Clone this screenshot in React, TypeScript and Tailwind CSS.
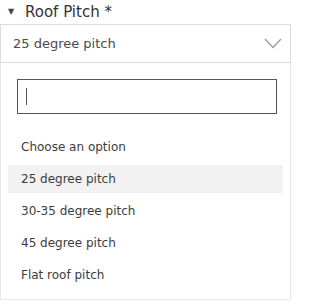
import React from 'react';

const options = ['Choose an option', '25 degree pitch', '30-35 degree pitch', '45 degree pitch', 'Flat roof pitch'];

export default function App() {
  const selected = '25 degree pitch';

  return (
    <div className="w-[296px] h-[306px] bg-white text-[#3c3c3c] overflow-hidden" style={{ fontFamily: '"DejaVu Sans", sans-serif' }}>
      {/* label */}
      <div className="h-[24px] flex items-center">
        <span className="ml-[8px] w-[8px] text-[8px] leading-none text-[#444]">▼</span>
        <span className="ml-[9px] text-[15px] text-[#333]">Roof Pitch *</span>
      </div>

      {/* select */}
      <div className="w-[291px] h-[39px] border border-[#dcdcdc] flex items-center justify-between pl-[12px] pr-[8px]">
        <span className="text-[13px] text-[#4a4a4a]">{selected}</span>
        <svg width="18" height="11" viewBox="0 0 18 11" fill="none">
          <path d="M1 1 L9 9.5 L17 1" stroke="#9a9a9a" strokeWidth="1.3" />
        </svg>
      </div>

      {/* dropdown */}
      <div className="w-[291px] h-[237px] border-x border-b border-[#e6e6e6] pt-[16px]">
        <div className="ml-[16px] w-[260px] h-[35px] border border-[#555] flex items-center pl-[8px]">
          <span className="w-px h-[17px] bg-[#555]" />
        </div>
        <ul className="mt-[19px] flex flex-col gap-[4px] mx-[7px]">
          {options.map((o) => (
            <li
              key={o}
              className={`h-[28px] flex items-center pl-[13px] text-[12px] ${o === selected ? 'bg-[#f2f2f2]' : ''}`}
            >
              {o}
            </li>
          ))}
        </ul>
      </div>
    </div>
  );
}
